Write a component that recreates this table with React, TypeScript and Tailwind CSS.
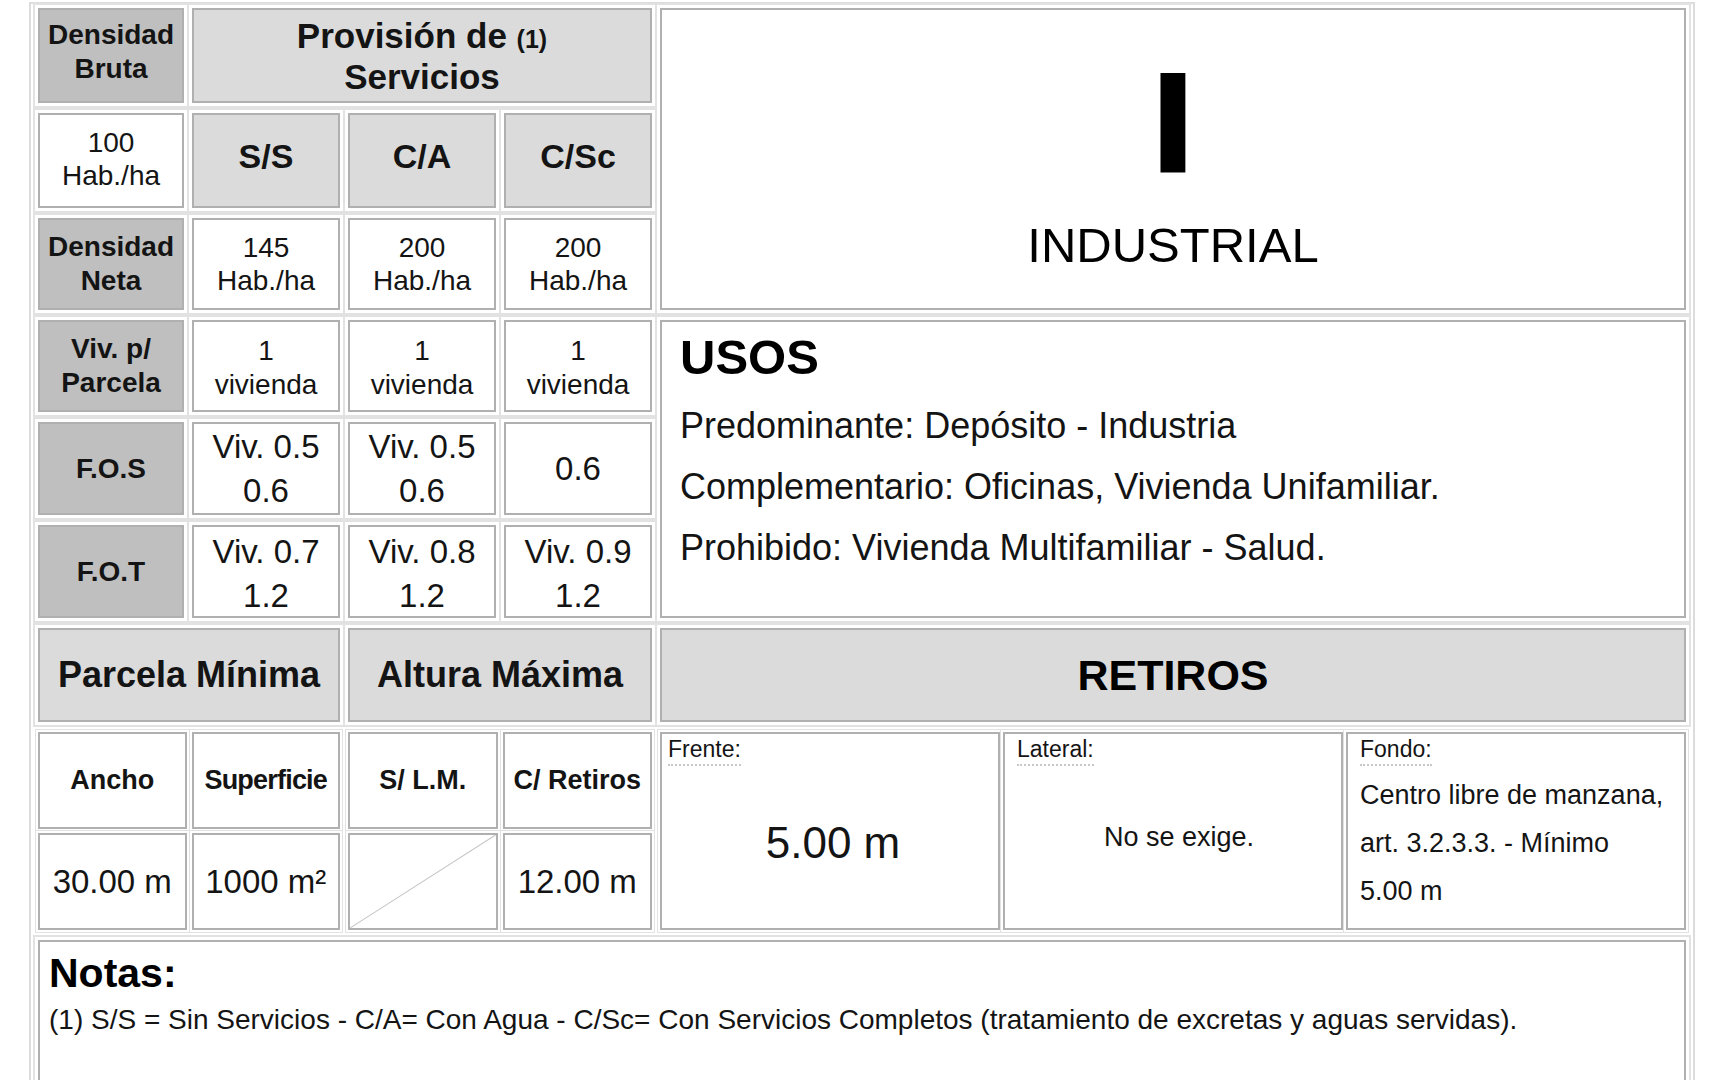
import React from "react"

// Ficha de zona: Industrial

type CellProps = {
  className?: string
  children?: React.ReactNode
}

const frame = "border-2 border-[#b0b0b0] shadow-[0_0_0_3px_#fff,0_0_0_5px_#e2e2e2]"
const innerFrame = "border-2 border-[#b0b0b0] shadow-[0_0_0_2px_#fff,0_0_0_3px_#e2e2e2]"

function Cell({ className = "", children }: CellProps) {
  return (
    <div className={`flex flex-col items-center justify-center text-center ${frame} ${className}`}>
      {children}
    </div>
  )
}

function SubCell({ className = "", children }: CellProps) {
  return (
    <div className={`relative flex flex-col items-center justify-center text-center ${innerFrame} ${className}`}>
      {children}
    </div>
  )
}

const rowLabels = [
  { a: "Densidad", b: "Neta" },
  { a: "Viv. p/", b: "Parcela" },
]

export default function App() {
  const dark = "bg-[#bfbfbf]"
  const light = "bg-[#dbdbdb]"
  const label = "text-[28px] leading-[34px] font-bold"

  return (
    <div className="min-h-screen bg-white pl-[29px] pt-[2px] font-['Liberation_Sans',Arial,sans-serif] text-[#141414]">
      <div className="w-[1666px] border-2 border-b-0 border-[#dcdcdc] px-[7px] pt-[4px]">
        <div className="grid grid-cols-[146px_148px_148px_148px_1026px] grid-rows-[95px_95px_92px_92px_93px_93px_94px_198px_160px] gap-x-2 gap-y-[10px]">
          {/* fila 1 */}
          <Cell className={`col-start-1 row-start-1 ${dark} pb-2`}>
            <span className={label}>Densidad</span>
            <span className={label}>Bruta</span>
          </Cell>
          <Cell className={`col-start-2 col-span-3 row-start-1 ${light}`}>
            <span className="text-[35px] leading-[41px] font-bold">
              Provisión de <span className="text-[25px] leading-none">(1)</span>
            </span>
            <span className="text-[35px] leading-[41px] font-bold">Servicios</span>
          </Cell>

          {/* zona */}
          <Cell className="col-start-5 row-start-1 row-span-3 justify-start bg-white">
            <span className="mt-[43px] text-[138px] leading-none font-bold text-black [-webkit-text-stroke:5px_black]">
              I
            </span>
            <span className="mt-[30px] text-[49px] leading-none text-black">INDUSTRIAL</span>
          </Cell>

          {/* fila 2 */}
          <Cell className="col-start-1 row-start-2 bg-white pb-1">
            <span className="text-[28px] leading-[33px]">100</span>
            <span className="text-[28px] leading-[33px]">Hab./ha</span>
          </Cell>
          {["S/S", "C/A", "C/Sc"].map((h, i) => (
            <Cell key={h} className={`row-start-2 pb-2 ${light} ${i === 0 ? "col-start-2" : i === 1 ? "col-start-3" : "col-start-4"}`}>
              <span className="text-[34px] font-bold">{h}</span>
            </Cell>
          ))}

          {/* fila 3 */}
          <Cell className={`col-start-1 row-start-3 ${dark}`}>
            <span className={label}>{rowLabels[0].a}</span>
            <span className={label}>{rowLabels[0].b}</span>
          </Cell>
          {["145", "200", "200"].map((v, i) => (
            <Cell key={i} className={`row-start-3 bg-white ${i === 0 ? "col-start-2" : i === 1 ? "col-start-3" : "col-start-4"}`}>
              <span className="text-[28px] leading-[33px]">{v}</span>
              <span className="text-[28px] leading-[33px]">Hab./ha</span>
            </Cell>
          ))}

          {/* fila 4 */}
          <Cell className={`col-start-1 row-start-4 ${dark}`}>
            <span className={label}>{rowLabels[1].a}</span>
            <span className={label}>{rowLabels[1].b}</span>
          </Cell>
          {[0, 1, 2].map((i) => (
            <Cell key={i} className={`row-start-4 bg-white pt-1 ${i === 0 ? "col-start-2" : i === 1 ? "col-start-3" : "col-start-4"}`}>
              <span className="text-[28px] leading-[34px]">1</span>
              <span className="text-[28px] leading-[34px]">vivienda</span>
            </Cell>
          ))}

          {/* usos */}
          <div className={`col-start-5 row-start-4 row-span-3 flex flex-col bg-white pl-[18px] pt-[11px] ${frame}`}>
            <span className="text-[49px] leading-none font-bold text-black">USOS</span>
            <div className="mt-[13px] flex flex-col text-[36px] leading-[61px]">
              <span>Predominante: Depósito - Industria</span>
              <span>Complementario: Oficinas, Vivienda Unifamiliar.</span>
              <span>Prohibido: Vivienda Multifamiliar - Salud.</span>
            </div>
          </div>

          {/* fila 5 */}
          <Cell className={`col-start-1 row-start-5 ${dark}`}>
            <span className={label}>F.O.S</span>
          </Cell>
          <Cell className="col-start-2 row-start-5 bg-white">
            <span className="text-[33px] leading-[44px]">Viv. 0.5</span>
            <span className="text-[33px] leading-[44px]">0.6</span>
          </Cell>
          <Cell className="col-start-3 row-start-5 bg-white">
            <span className="text-[33px] leading-[44px]">Viv. 0.5</span>
            <span className="text-[33px] leading-[44px]">0.6</span>
          </Cell>
          <Cell className="col-start-4 row-start-5 bg-white">
            <span className="text-[33px] leading-[44px]">0.6</span>
          </Cell>

          {/* fila 6 */}
          <Cell className={`col-start-1 row-start-6 ${dark}`}>
            <span className={label}>F.O.T</span>
          </Cell>
          {["0.7", "0.8", "0.9"].map((v, i) => (
            <Cell key={v} className={`row-start-6 bg-white pt-1 ${i === 0 ? "col-start-2" : i === 1 ? "col-start-3" : "col-start-4"}`}>
              <span className="text-[33px] leading-[44px]">Viv. {v}</span>
              <span className="text-[33px] leading-[44px]">1.2</span>
            </Cell>
          ))}

          {/* fila 7 */}
          <Cell className={`col-start-1 col-span-2 row-start-7 ${light}`}>
            <span className="text-[36px] font-bold">Parcela Mínima</span>
          </Cell>
          <Cell className={`col-start-3 col-span-2 row-start-7 ${light}`}>
            <span className="text-[36px] font-bold">Altura Máxima</span>
          </Cell>
          <Cell className={`col-start-5 row-start-7 ${light}`}>
            <span className="text-[43px] font-bold text-black">RETIROS</span>
          </Cell>

          {/* fila 8: parcela */}
          <div className="col-start-1 col-span-2 row-start-8 grid grid-cols-2 grid-rows-2 gap-x-[5px] gap-y-1">
            <SubCell className="bg-white">
              <span className="text-[27px] font-bold">Ancho</span>
            </SubCell>
            <SubCell className="bg-white">
              <span className="text-[27px] font-bold tracking-[-0.8px]">Superficie</span>
            </SubCell>
            <SubCell className="bg-white">
              <span className="text-[33px]">30.00 m</span>
            </SubCell>
            <SubCell className="bg-white">
              <span className="text-[33px]">1000 m²</span>
            </SubCell>
          </div>

          {/* fila 8: altura */}
          <div className="col-start-3 col-span-2 row-start-8 grid grid-cols-2 grid-rows-2 gap-x-[5px] gap-y-1">
            <SubCell className="bg-white">
              <span className="text-[27px] font-bold">S/ L.M.</span>
            </SubCell>
            <SubCell className="bg-white">
              <span className="text-[27px] font-bold">C/ Retiros</span>
            </SubCell>
            <SubCell className="bg-white">
              <svg className="absolute inset-0 h-full w-full" viewBox="0 0 100 100" preserveAspectRatio="none">
                <line x1="0" y1="100" x2="100" y2="0" stroke="#c4c4c4" strokeWidth="1" vectorEffect="non-scaling-stroke" />
              </svg>
            </SubCell>
            <SubCell className="bg-white">
              <span className="text-[33px]">12.00 m</span>
            </SubCell>
          </div>

          {/* fila 8: retiros */}
          <div className="col-start-5 row-start-8 grid grid-cols-3 gap-x-[3px]">
            <div className={`flex flex-col bg-white pl-[6px] ${innerFrame}`}>
              <span className="self-start border-b-2 border-dotted border-[#c8c8c8] text-[23px] leading-[30px]">Frente:</span>
              <div className="flex flex-1 items-center justify-center pb-2">
                <span className="text-[44px]">5.00 m</span>
              </div>
            </div>
            <div className={`flex flex-col bg-white pl-[12px] ${innerFrame}`}>
              <span className="self-start border-b-2 border-dotted border-[#c8c8c8] text-[23px] leading-[30px]">Lateral:</span>
              <div className="flex flex-1 items-center justify-center pb-5">
                <span className="text-[27px]">No se exige.</span>
              </div>
            </div>
            <div className={`flex flex-col bg-white pl-[12px] ${innerFrame}`}>
              <span className="self-start border-b-2 border-dotted border-[#c8c8c8] text-[23px] leading-[30px]">Fondo:</span>
              <div className="mt-[5px] flex flex-col text-[27px] leading-[48px]">
                <span>Centro libre de manzana,</span>
                <span>art. 3.2.3.3. - Mínimo</span>
                <span>5.00 m</span>
              </div>
            </div>
          </div>

          {/* notas */}
          <div className={`col-start-1 col-span-5 row-start-9 flex flex-col bg-white pl-[9px] pt-[11px] ${frame}`}>
            <span className="text-[41px] leading-none font-bold text-black">Notas:</span>
            <span className="mt-3 text-[28px] leading-none">
              (1) S/S = Sin Servicios - C/A= Con Agua - C/Sc= Con Servicios Completos (tratamiento de excretas y aguas servidas).
            </span>
          </div>
        </div>
      </div>
    </div>
  )
}
